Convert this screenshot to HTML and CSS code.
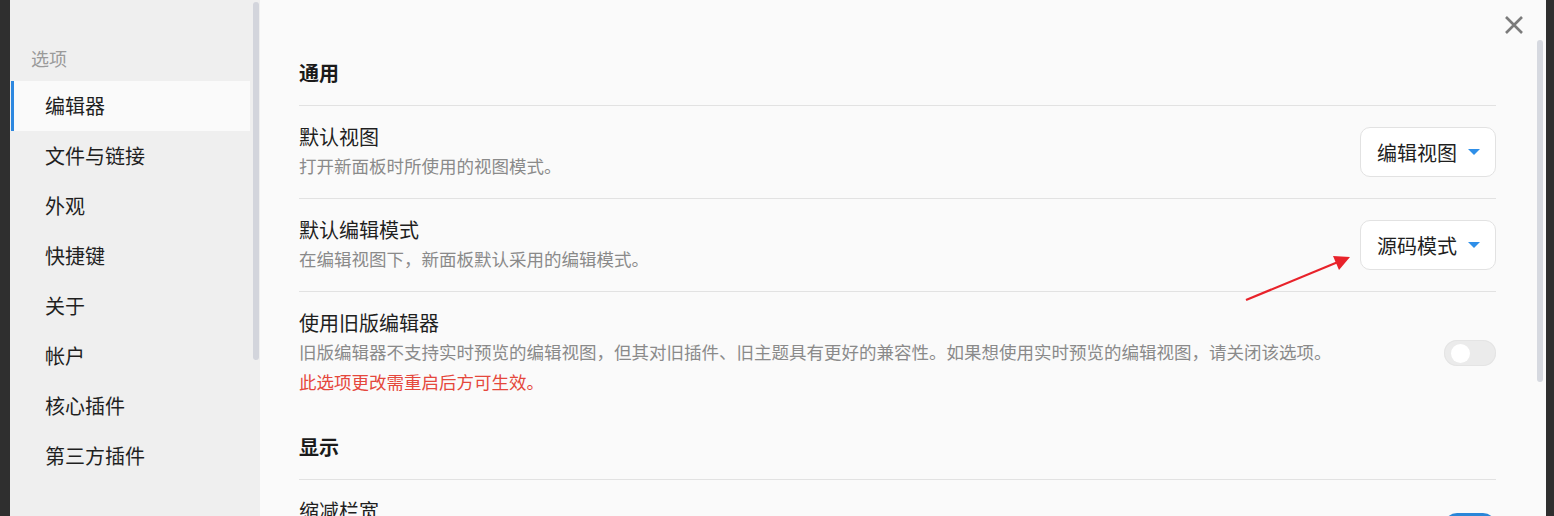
FILE: index.html
```html
<!DOCTYPE html>
<html lang="zh-CN">
<head>
<meta charset="utf-8">
<title>选项</title>
<link rel="stylesheet" href="styles.css">
</head>
<body>
<div class="page">
  <div class="backdrop-left"></div>
  <div class="modal">
    <aside class="sidebar">
      <nav class="nav">
        <div class="nav-label">选项</div>
        <div class="nav-item active">编辑器</div>
        <div class="nav-item">文件与链接</div>
        <div class="nav-item">外观</div>
        <div class="nav-item">快捷键</div>
        <div class="nav-item">关于</div>
        <div class="nav-item">帐户</div>
        <div class="nav-item">核心插件</div>
        <div class="nav-item">第三方插件</div>
      </nav>
      <div class="side-track"><div class="side-thumb"></div></div>
    </aside>
    <main class="main">
      <div class="content">
        <h2 class="heading">通用</h2>
        <div class="row">
          <div class="info">
            <div class="title">默认视图</div>
            <div class="desc">打开新面板时所使用的视图模式。</div>
          </div>
          <div class="select"><span>编辑视图</span><span class="caret"></span></div>
        </div>
        <div class="row">
          <div class="info">
            <div class="title">默认编辑模式</div>
            <div class="desc">在编辑视图下，新面板默认采用的编辑模式。</div>
          </div>
          <div class="select"><span>源码模式</span><span class="caret"></span></div>
        </div>
        <div class="row last">
          <div class="info">
            <div class="title">使用旧版编辑器</div>
            <div class="desc">旧版编辑器不支持实时预览的编辑视图，但其对旧插件、旧主题具有更好的兼容性。如果想使用实时预览的编辑视图，请关闭该选项。</div>
            <div class="desc warn">此选项更改需重启后方可生效。</div>
          </div>
          <div class="toggle"><div class="knob"></div></div>
        </div>
        <h2 class="heading">显示</h2>
        <div class="row">
          <div class="info tall">
            <div class="title">缩减栏宽</div>
          </div>
          <div class="toggle on"><div class="knob"></div></div>
        </div>
      </div>
      <div class="main-track"><div class="main-thumb"></div></div>
      <button class="close" aria-label="关闭">
        <svg width="20" height="20" viewBox="0 0 20 20"><path d="M2 2 L18 18 M18 2 L2 18" stroke="#7b7b7b" stroke-width="2.6" fill="none"/></svg>
      </button>
    </main>
  </div>
  <div class="backdrop-right"></div>
  <svg class="arrow" width="1554" height="516" viewBox="0 0 1554 516">
    <line x1="1246" y1="300" x2="1338" y2="262" stroke="#e8222a" stroke-width="2.2"/>
    <polygon points="1350,257 1333,256 1339,270" fill="#e8222a"/>
  </svg>
</div>
</body>
</html>
```
FILE: styles.css
```css
* { box-sizing: border-box; }
html, body { margin: 0; padding: 0; }
body {
  background: #2f2f2f;
  font-family: "Noto Sans CJK SC", "Noto Sans", sans-serif;
  color: #222;
  overflow: hidden;
}
.page {
  position: relative;
  display: flex;
  width: 1554px;
  height: 516px;
  overflow: hidden;
}
.backdrop-left { width: 10px; flex: none; background: #2f2f2f; }
.backdrop-right { width: 8px; flex: none; background: #2f2f2f; }
.modal {
  flex: 1;
  display: flex;
  height: 516px;
  overflow: hidden;
}
.sidebar {
  width: 250px;
  flex: none;
  background: #efefef;
  display: flex;
}
.nav {
  width: 240px;
  padding-top: 44px;
  padding-left: 1px;
}
.nav-label {
  height: 28px;
  line-height: 28px;
  padding-left: 20px;
  font-size: 18px;
  color: #9a9a9a;
  margin-bottom: 9px;
}
.nav-item {
  height: 50px;
  line-height: 50px;
  padding-left: 31px;
  font-size: 20px;
  color: #1f1f1f;
  border-left: 3px solid transparent;
}
.nav-item.active {
  background: #fafafa;
  border-left-color: #2d88e0;
}
.side-track {
  width: 6px;
  margin-left: 3px;
  padding-top: 2px;
}
.side-thumb {
  width: 6px;
  height: 358px;
  background: #d3d5dc;
  border-radius: 3px;
}
.main {
  position: relative;
  flex: 1;
  background: #fafafa;
  display: flex;
}
.content {
  width: 1236px;
  padding: 41px 0 0 39px;
}
.heading {
  margin: 0;
  font-size: 20px;
  font-weight: 700;
  line-height: 30px;
  padding-top: 17px;
  padding-bottom: 17px;
  border-bottom: 1px solid #e2e2e2;
  color: #1a1a1a;
}
.row {
  display: flex;
  align-items: center;
  justify-content: space-between;
  padding: 17px 0 17px;
  border-bottom: 1px solid #e2e2e2;
}
.row.last { border-bottom: none; padding-bottom: 18px; }
.info { flex: 1; }
.info.tall { min-height: 58px; }
.title {
  font-size: 20px;
  line-height: 28px;
  color: #1f1f1f;
}
.desc {
  font-size: 17.5px;
  line-height: 30px;
  color: #8a8a8a;
}
.desc.warn { color: #e5473c; }
.select {
  display: flex;
  align-items: center;
  height: 50px;
  width: 136px;
  padding-left: 16px;
  border: 1px solid #e2e2e2;
  border-radius: 10px;
  background: #ffffff;
  font-size: 20px;
  color: #1f1f1f;
}
.caret {
  width: 0;
  height: 0;
  margin-left: 11px;
  border-left: 6px solid transparent;
  border-right: 6px solid transparent;
  border-top: 6px solid #2f8fe8;
}
.toggle {
  width: 52px;
  height: 26px;
  border-radius: 13px;
  background: #ebebeb;
  box-shadow: inset 0 0 0 1px #e4e4e4;
  padding: 4px 0 0 7px;
}
.knob {
  width: 19px;
  height: 19px;
  border-radius: 50%;
  background: #ffffff;
}
.toggle.on { background: #2a86d8; box-shadow: none; }
.main-track {
  width: 6px;
  margin-left: 41px;
  padding-top: 40px;
}
.main-thumb {
  width: 6px;
  height: 342px;
  background: #d6d9e0;
  border-radius: 3px;
}
.close {
  position: absolute;
  top: 15px;
  right: 22px;
  width: 20px;
  height: 20px;
  padding: 0;
  border: none;
  background: none;
}
.close svg { display: block; }
.arrow {
  position: absolute;
  left: 0;
  top: 0;
  pointer-events: none;
}
```
